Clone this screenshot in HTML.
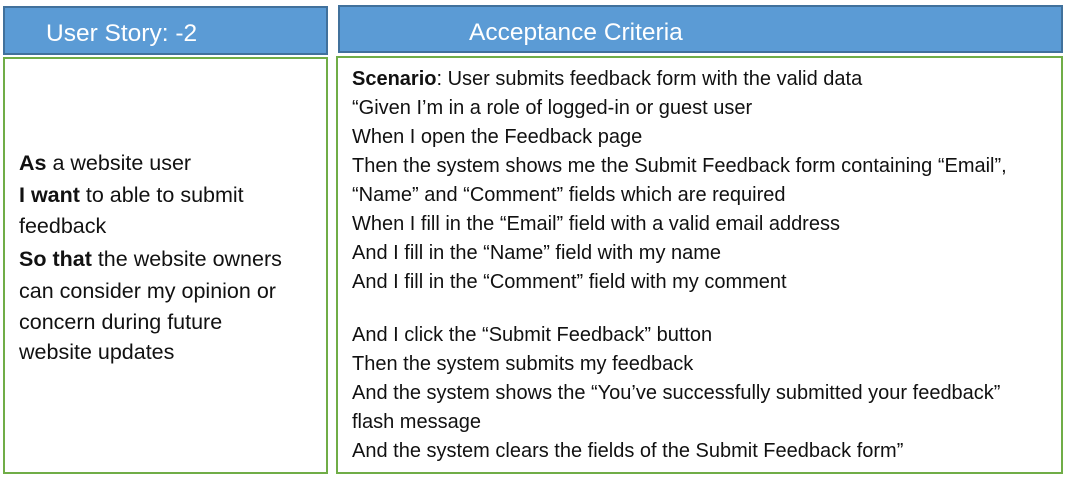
<!DOCTYPE html>
<html><head><style>
body{margin:0;width:1069px;height:481px;background:#fff;position:relative;overflow:hidden;font-family:"Liberation Sans",sans-serif;color:#111}
.h{position:absolute;background:#5b9bd5;border:2px solid #41719c;box-sizing:border-box;color:#fff;font-size:24.5px;line-height:52px}
.g{position:absolute;border:2px solid #70ad47;box-sizing:border-box}
.r{position:absolute;left:352px;font-size:20px;white-space:nowrap;letter-spacing:0}
.l{position:absolute;left:19px;font-size:21.5px;white-space:nowrap}
</style></head><body>
<div class="h" style="left:3px;top:6px;width:325px;height:49px;padding-left:41px">User Story: -2</div>
<div class="h" style="left:338px;top:5px;width:725px;height:48px;padding-left:129px">Acceptance Criteria</div>
<div class="g" style="left:3px;top:57px;width:325px;height:417px"></div>
<div class="g" style="left:336px;top:56px;width:727px;height:418px"></div>
<div class="l" style="top:151px"><b>As</b> a website user</div>
<div class="l" style="top:183px"><b>I want</b> to able to submit</div>
<div class="l" style="top:214px">feedback</div>
<div class="l" style="top:247px"><b>So that</b> the website owners</div>
<div class="l" style="top:279px">can consider my opinion or</div>
<div class="l" style="top:310px">concern during future</div>
<div class="l" style="top:340px">website updates</div>
<div class="r" style="top:68px"><b>Scenario</b>: User submits feedback form with the valid data</div>
<div class="r" style="top:97px">“Given I’m in a role of logged-in or guest user</div>
<div class="r" style="top:126px">When I open the Feedback page</div>
<div class="r" style="top:155px">Then the system shows me the Submit Feedback form containing “Email”,</div>
<div class="r" style="top:184px">“Name” and “Comment” fields which are required</div>
<div class="r" style="top:213px">When I fill in the “Email” field with a valid email address</div>
<div class="r" style="top:242px">And I fill in the “Name” field with my name</div>
<div class="r" style="top:271px">And I fill in the “Comment” field with my comment</div>
<div class="r" style="top:324px">And I click the “Submit Feedback” button</div>
<div class="r" style="top:353px">Then the system submits my feedback</div>
<div class="r" style="top:382px">And the system shows the “You’ve successfully submitted your feedback”</div>
<div class="r" style="top:411px">flash message</div>
<div class="r" style="top:440px">And the system clears the fields of the Submit Feedback form”</div>
</body></html>
